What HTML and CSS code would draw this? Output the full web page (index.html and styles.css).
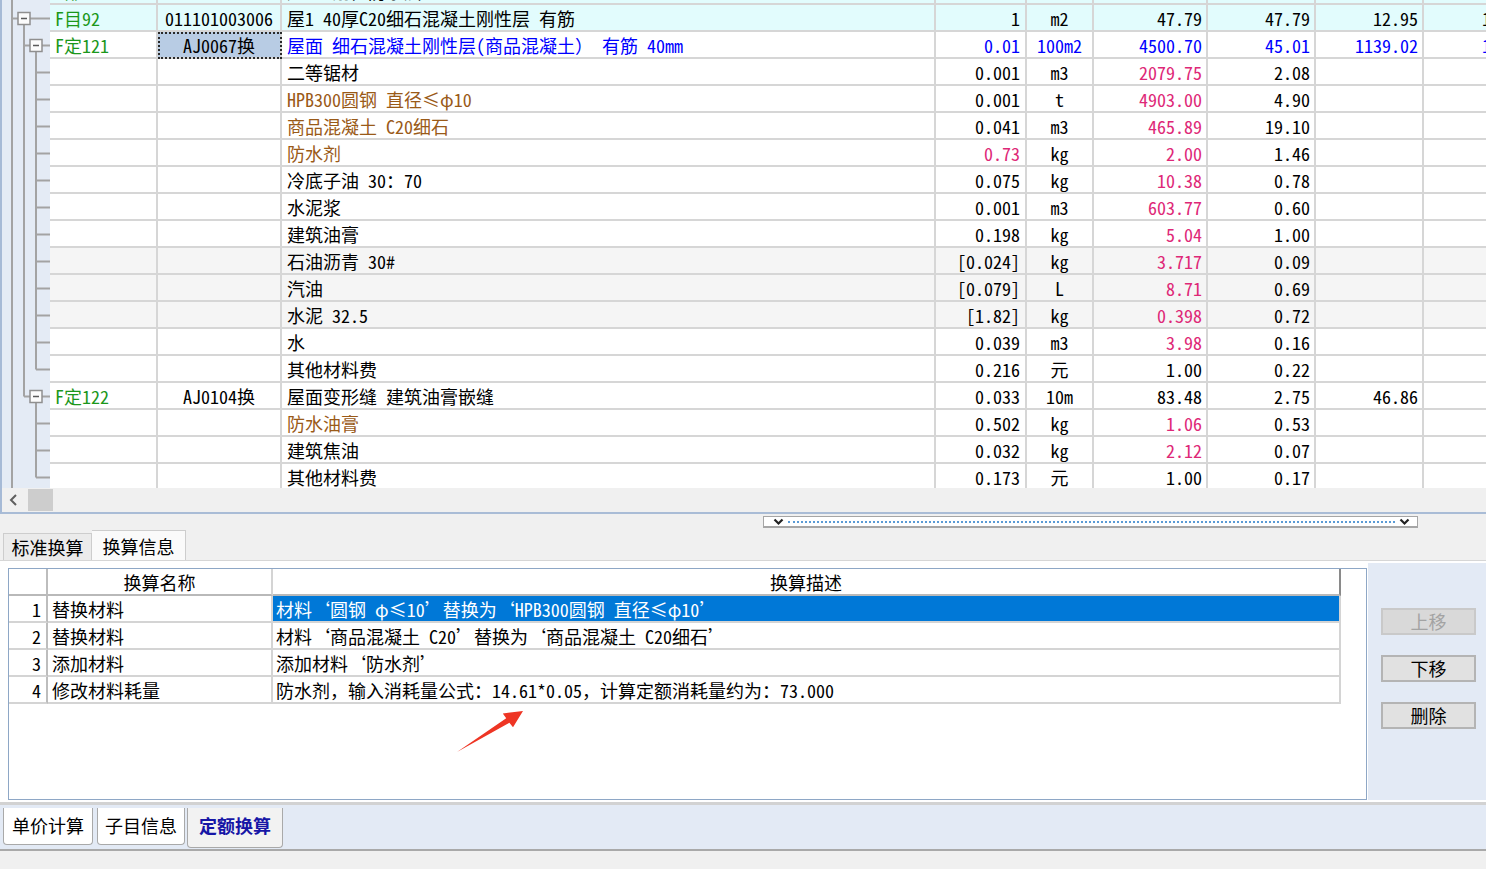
FILE: index.html
```html
<!DOCTYPE html>
<html lang="zh-CN">
<head>
<meta charset="utf-8">
<title>定额换算</title>
<link rel="stylesheet" href="styles.css">
</head>
<body>
<div class="top-panel">
  <div class="viewport">
    <svg class="tree" width="48" height="513" viewBox="2 -22 48 513">
      <g stroke="#a3a3a3" stroke-width="2" fill="none">
        <path d="M12 -22V491"/>
        <path d="M12 18.5H18M30 18.5H50"/>
        <path d="M24 24.5V396.5M24 45.5H30M42 45.5H50"/>
        <path d="M36 51.5V369.5M36 72.5H50M36 99.5H50M36 126.5H50M36 153.5H50M36 180.5H50M36 207.5H50M36 234.5H50M36 261.5H50M36 288.5H50M36 315.5H50M36 342.5H50M36 369.5H50"/>
        <path d="M24 396.5H30M42 396.5H50M36 402.5V477.5M36 423.5H50M36 450.5H50M36 477.5H50"/>
      </g>
      <g stroke="#8f8f8f" stroke-width="1.5" fill="#fbfbfb">
        <rect x="18" y="12.5" width="12" height="12"/>
        <rect x="30" y="39.5" width="12" height="12"/>
        <rect x="30" y="390.5" width="12" height="12"/>
      </g>
      <g stroke="#5a5a5a" stroke-width="1.5">
        <path d="M21 18.5H27M33 45.5H39M33 396.5H39"/>
      </g>
    </svg>
    <div class="grid">
      <div class="r cyan"><div class="c w1 g">F部4</div><div class="c w2"></div><div class="c w3">屋　　　刚性防水层</div><div class="c w4"></div><div class="c w5"></div><div class="c w6"></div><div class="c w7"></div><div class="c w8"></div><div class="c w9"></div></div>
      <div class="r cyan"><div class="c w1 g">F目92</div><div class="c w2">011101003006</div><div class="c w3">屋1 40厚C20细石混凝土刚性层 有筋</div><div class="c w4">1</div><div class="c w5">m2</div><div class="c w6">47.79</div><div class="c w7">47.79</div><div class="c w8">12.95</div><div class="c w9">12.95</div></div>
      <div class="r bl"><div class="c w1 g">F定121</div><div class="c w2 sel">AJ0067换</div><div class="c w3">屋面 细石混凝土刚性层(商品混凝土<span class="fw">）</span> 有筋 40mm</div><div class="c w4">0.01</div><div class="c w5">100m2</div><div class="c w6">4500.70</div><div class="c w7">45.01</div><div class="c w8">1139.02</div><div class="c w9">1139.02</div></div>
      <div class="r"><div class="c w1"></div><div class="c w2"></div><div class="c w3">二等锯材</div><div class="c w4">0.001</div><div class="c w5">m3</div><div class="c w6 pk">2079.75</div><div class="c w7">2.08</div><div class="c w8"></div><div class="c w9"></div></div>
      <div class="r"><div class="c w1"></div><div class="c w2"></div><div class="c w3 br">HPB300圆钢 直径<span class="fw">≤</span>φ10</div><div class="c w4">0.001</div><div class="c w5">t</div><div class="c w6 pk">4903.00</div><div class="c w7">4.90</div><div class="c w8"></div><div class="c w9"></div></div>
      <div class="r"><div class="c w1"></div><div class="c w2"></div><div class="c w3 br">商品混凝土 C20细石</div><div class="c w4">0.041</div><div class="c w5">m3</div><div class="c w6 pk">465.89</div><div class="c w7">19.10</div><div class="c w8"></div><div class="c w9"></div></div>
      <div class="r"><div class="c w1"></div><div class="c w2"></div><div class="c w3 br">防水剂</div><div class="c w4 pk">0.73</div><div class="c w5">kg</div><div class="c w6 pk">2.00</div><div class="c w7">1.46</div><div class="c w8"></div><div class="c w9"></div></div>
      <div class="r"><div class="c w1"></div><div class="c w2"></div><div class="c w3">冷底子油 30<span class="fw">：</span>70</div><div class="c w4">0.075</div><div class="c w5">kg</div><div class="c w6 pk">10.38</div><div class="c w7">0.78</div><div class="c w8"></div><div class="c w9"></div></div>
      <div class="r"><div class="c w1"></div><div class="c w2"></div><div class="c w3">水泥浆</div><div class="c w4">0.001</div><div class="c w5">m3</div><div class="c w6 pk">603.77</div><div class="c w7">0.60</div><div class="c w8"></div><div class="c w9"></div></div>
      <div class="r"><div class="c w1"></div><div class="c w2"></div><div class="c w3">建筑油膏</div><div class="c w4">0.198</div><div class="c w5">kg</div><div class="c w6 pk">5.04</div><div class="c w7">1.00</div><div class="c w8"></div><div class="c w9"></div></div>
      <div class="r grey"><div class="c w1"></div><div class="c w2"></div><div class="c w3">石油沥青 30#</div><div class="c w4">[0.024]</div><div class="c w5">kg</div><div class="c w6 pk">3.717</div><div class="c w7">0.09</div><div class="c w8"></div><div class="c w9"></div></div>
      <div class="r grey"><div class="c w1"></div><div class="c w2"></div><div class="c w3">汽油</div><div class="c w4">[0.079]</div><div class="c w5">L</div><div class="c w6 pk">8.71</div><div class="c w7">0.69</div><div class="c w8"></div><div class="c w9"></div></div>
      <div class="r grey"><div class="c w1"></div><div class="c w2"></div><div class="c w3">水泥 32.5</div><div class="c w4">[1.82]</div><div class="c w5">kg</div><div class="c w6 pk">0.398</div><div class="c w7">0.72</div><div class="c w8"></div><div class="c w9"></div></div>
      <div class="r"><div class="c w1"></div><div class="c w2"></div><div class="c w3">水</div><div class="c w4">0.039</div><div class="c w5">m3</div><div class="c w6 pk">3.98</div><div class="c w7">0.16</div><div class="c w8"></div><div class="c w9"></div></div>
      <div class="r"><div class="c w1"></div><div class="c w2"></div><div class="c w3">其他材料费</div><div class="c w4">0.216</div><div class="c w5">元</div><div class="c w6">1.00</div><div class="c w7">0.22</div><div class="c w8"></div><div class="c w9"></div></div>
      <div class="r"><div class="c w1 g">F定122</div><div class="c w2">AJ0104换</div><div class="c w3">屋面变形缝 建筑油膏嵌缝</div><div class="c w4">0.033</div><div class="c w5">10m</div><div class="c w6">83.48</div><div class="c w7">2.75</div><div class="c w8">46.86</div><div class="c w9"></div></div>
      <div class="r"><div class="c w1"></div><div class="c w2"></div><div class="c w3 br">防水油膏</div><div class="c w4">0.502</div><div class="c w5">kg</div><div class="c w6 pk">1.06</div><div class="c w7">0.53</div><div class="c w8"></div><div class="c w9"></div></div>
      <div class="r"><div class="c w1"></div><div class="c w2"></div><div class="c w3">建筑焦油</div><div class="c w4">0.032</div><div class="c w5">kg</div><div class="c w6 pk">2.12</div><div class="c w7">0.07</div><div class="c w8"></div><div class="c w9"></div></div>
      <div class="r"><div class="c w1"></div><div class="c w2"></div><div class="c w3">其他材料费</div><div class="c w4">0.173</div><div class="c w5">元</div><div class="c w6">1.00</div><div class="c w7">0.17</div><div class="c w8"></div><div class="c w9"></div></div>
    </div>
  </div>
  <div class="hscroll">
    <div class="sarrow"><svg width="10" height="12" viewBox="0 0 10 12"><path d="M7 1L2 6L7 11" fill="none" stroke="#5f5f5f" stroke-width="2"/></svg></div>
    <div class="thumb"></div>
  </div>
</div>

<div class="splitter">
  <div class="combo">
    <svg width="11" height="8" viewBox="0 0 11 8"><path d="M1.5 1.5L5.5 5.5L9.5 1.5" fill="none" stroke="#222" stroke-width="2.2"/></svg>
    <div class="dots"></div>
    <svg width="11" height="8" viewBox="0 0 11 8"><path d="M1.5 1.5L5.5 5.5L9.5 1.5" fill="none" stroke="#222" stroke-width="2.2"/></svg>
  </div>
</div>

<div class="tabs-top">
  <div class="ttab t1">标准换算</div>
  <div class="ttab t2 on">换算信息</div>
</div>

<div class="lower">
  <div class="lower-left">
    <div class="box">
      <div class="lr head"><div class="lc rn"></div><div class="lc nm ctr">换算名称</div><div class="lc ds ctr">换算描述</div></div>
      <div class="lr"><div class="lc rn">1</div><div class="lc nm">替换材料</div><div class="lc ds selrow">材料<span class="fw">‘</span>圆钢 φ<span class="fw">≤</span>10<span class="fw">’</span>替换为<span class="fw">‘</span>HPB300圆钢 直径<span class="fw">≤</span>φ10<span class="fw">’</span></div></div>
      <div class="lr"><div class="lc rn">2</div><div class="lc nm">替换材料</div><div class="lc ds">材料<span class="fw">‘</span>商品混凝土 C20<span class="fw">’</span>替换为<span class="fw">‘</span>商品混凝土 C20细石<span class="fw">’</span></div></div>
      <div class="lr"><div class="lc rn">3</div><div class="lc nm">添加材料</div><div class="lc ds">添加材料<span class="fw">‘</span>防水剂<span class="fw">’</span></div></div>
      <div class="lr"><div class="lc rn">4</div><div class="lc nm">修改材料耗量</div><div class="lc ds">防水剂<span class="fw">，</span>输入消耗量公式<span class="fw">：</span>14.61*0.05<span class="fw">，</span>计算定额消耗量约为<span class="fw">：</span>73.000</div></div>
    </div>
  </div>
  <div class="lower-right">
    <div class="btn dis">上移</div>
    <div class="btn">下移</div>
    <div class="btn">删除</div>
  </div>
</div>

<div class="bstrip">
  <div class="btab b1">单价计算</div>
  <div class="btab b2">子目信息</div>
  <div class="btab b3 on">定额换算</div>
</div>

<svg class="red-arrow" width="80" height="52" viewBox="0 0 80 52">
  <polygon points="7,47 56.2,13.2 52.8,8.4 73,6 63,22.2 59.4,17.8" fill="#ee3524"/>
</svg>
</body>
</html>
```

FILE: styles.css
```css
* { box-sizing: border-box; }
html, body { margin: 0; padding: 0; }
body {
  width: 1486px;
  height: 869px;
  overflow: hidden;
  position: relative;
  background: #f0f0f0;
  color: #000;
  font-family: "Noto Sans CJK SC", "Noto Sans", sans-serif;
  font-size: 18px;
  font-feature-settings: "hwid" 1;
}
.fw { font-feature-settings: normal; }

/* top grid */
.top-panel {
  height: 514px;
  border-left: 2px solid #a6bad6;
  border-bottom: 2px solid #a9bcd6;
  background: #fff;
  display: flex;
  flex-direction: column;
}
.viewport {
  height: 488px;
  overflow: hidden;
  display: flex;
  background: #fff;
}
.tree {
  flex: none;
  display: block;
  margin-top: -22px;
  background: #e4ebf5;
}
.grid { flex: none; margin-top: -22px; }
.r { display: flex; height: 27px; }
.c {
  flex: none;
  border-right: 2px solid #d6d6d6;
  border-bottom: 2px solid #d6d6d6;
  padding: 2px 5px 0;
  line-height: 23px;
  white-space: nowrap;
  overflow: hidden;
}
.w1 { width: 108px; }
.w2 { width: 124px; text-align: center; padding-left: 0; padding-right: 0; }
.w3 { width: 654px; }
.w4 { width: 91px; text-align: right; padding-right: 5px; }
.w5 { width: 67px; text-align: center; padding-left: 0; padding-right: 0; }
.w6 { width: 114px; text-align: right; padding-right: 4px; }
.w7 { width: 108px; text-align: right; padding-right: 4px; }
.w8 { width: 108px; text-align: right; padding-right: 4px; }
.w9 { width: 120px; padding-left: 58px; border-right: none; }

.cyan { background: #e2fcfd; }
.grey { background: #f5f5f5; }
.g { color: #1b971b; }
.bl { color: #0000ff; }
.bl .w2 { color: #000; }
.bl .g { color: #1b971b; }
.br { color: #9a5a18; }
.pk { color: #de2877; }
.sel {
  background: #b8cce4;
  outline: 2px dotted #2a2a2a;
  outline-offset: -2px;
}

.hscroll {
  height: 24px;
  background: #f0f0f0;
  display: flex;
  align-items: center;
}
.sarrow {
  width: 24px;
  height: 24px;
  display: flex;
  align-items: center;
  justify-content: center;
}
.thumb {
  width: 25px;
  height: 22px;
  margin-left: 2px;
  background: #cdcdcd;
}

/* splitter */
.splitter { height: 16px; padding: 2px 0 0 763px; }
.combo {
  width: 655px;
  height: 12px;
  border: 1px solid #a6a6a6;
  border-bottom-width: 2px;
  background: #fff;
  display: flex;
  align-items: center;
  padding: 0 7px 0 9px;
  gap: 4px;
}
.combo svg { display: block; flex: none; }
.combo .dots { flex: 1; height: 0; border-top: 2px dotted #5b9bd5; }

/* tabs */
.tabs-top {
  height: 30px;
  display: flex;
  align-items: flex-end;
  padding-left: 3px;
}
.ttab {
  height: 27px;
  border: 1px solid #cdcdcd;
  border-bottom: none;
  background: #ebebeb;
  text-align: center;
  line-height: 26px;
}
.t1 { width: 89px; }
.t2 { width: 94px; }
.ttab.on { height: 30px; background: #fafafa; line-height: 30px; border-left: none; }

/* lower panel */
.lower {
  height: 242px;
  display: flex;
  background: #fff;
  border-top: 1px solid #d6d6d6;
}
.lower-left { width: 1368px; flex: none; padding: 7px 0 0 8px; }
.box {
  width: 1359px;
  height: 232px;
  border: 1px solid #8ea7c6;
  background: #fff;
}
.lr { display: flex; height: 27px; }
.lc {
  flex: none;
  border-right: 2px solid #d4d4d4;
  border-bottom: 2px solid #d4d4d4;
  line-height: 24px;
  padding-top: 1px;
  white-space: nowrap;
  overflow: hidden;
  padding-left: 4px;
}
.rn { width: 39px; text-align: right; padding-left: 0; padding-right: 5px; border-right-color: #bdbdbd; }
.nm { width: 225px; }
.ds { width: 1068px; padding-left: 3px; }
.ctr { text-align: center; padding-left: 0; }
.head .lc { border-bottom-color: #b9b9b9; }
.head .ds { border-right-color: #8a8a8a; }
.selrow { background: #0078d7; color: #fff; }

.lower-right {
  flex: 1;
  background: #e3eaf5;
  margin: 2px 0;
  display: flex;
  flex-direction: column;
  gap: 20px;
  padding: 45px 0 0 13px;
}
.btn {
  width: 95px;
  height: 27px;
  border: 2px solid #b4b4b4;
  background: #e1e1e1;
  text-align: center;
  line-height: 23px;
}
.btn.dis { color: #a3a3a3; background: #d9d9d9; border-color: #c9c9c9; }

/* bottom tabs */
.bstrip {
  height: 49px;
  border-top: 3px solid #d2d2d2;
  border-bottom: 2px solid #a9a9a9;
  background: #e3eaf5;
  display: flex;
  align-items: flex-start;
  padding: 3px 0 0 3px;
}
.btab {
  height: 37px;
  border: 1px solid #a9a9a9;
  border-top: none;
  border-radius: 0 0 4px 4px;
  background: #fff;
  text-align: center;
  line-height: 35px;
}
.b1 { width: 90px; }
.b2 { width: 88px; margin-left: 4px; }
.b3 { width: 96px; margin-left: 2px; }
.btab.on {
  height: 40px;
  background: #f2f2f2;
  color: #1616a6;
  font-weight: bold;
}

.red-arrow {
  position: absolute;
  left: 450px;
  top: 705px;
  pointer-events: none;
}
```
